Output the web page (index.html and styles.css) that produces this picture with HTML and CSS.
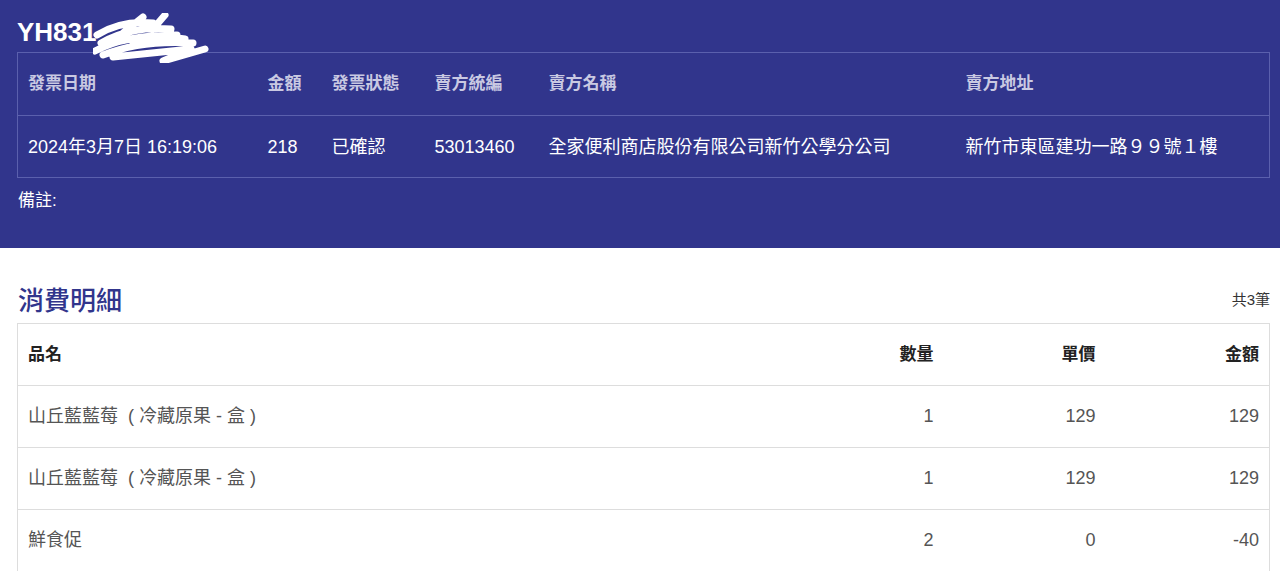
FILE: index.html
```html
<!DOCTYPE html>
<html lang="zh-Hant">
    <head>
        <meta charset="UTF-8" />
        <meta name="viewport" content="width=device-width, initial-scale=1.0" />
        <title>發票明細</title>
        <link rel="stylesheet" href="styles.css">
    </head>
    <body>
        <section class="invoice">
            <h1 class="invoice-no">
                YH831<svg class="scribble" width="120" height="50" viewBox="0 0 120 50" aria-hidden="true">
                    <path d="M4 22 C20 12 40 8 60 10 M8 30 C30 18 50 14 78 16 M2 38 C24 26 52 22 84 22 M10 42 C40 30 70 28 100 30 M20 44 L98 36 L70 48 L112 36 M30 20 L50 4 M60 16 L72 2 M40 30 C60 24 80 24 92 26"
                        fill="none" stroke="#fff" stroke-width="7" stroke-linecap="round" stroke-linejoin="round" />
                </svg>
            </h1>
            <table class="info">
                <colgroup>
                    <col style="width:240px">
                    <col style="width:64px">
                    <col style="width:103px">
                    <col style="width:114px">
                    <col style="width:417px">
                    <col>
                </colgroup>
                <tr>
                    <th>發票日期</th>
                    <th>金額</th>
                    <th>發票狀態</th>
                    <th>賣方統編</th>
                    <th>賣方名稱</th>
                    <th>賣方地址</th>
                </tr>
                <tr>
                    <td>2024年3月7日 16:19:06</td>
                    <td>218</td>
                    <td>已確認</td>
                    <td>53013460</td>
                    <td>全家便利商店股份有限公司新竹公學分公司</td>
                    <td>新竹市東區建功一路９９號１樓</td>
                </tr>
            </table>
            <p class="note">備註:</p>
        </section>

        <section class="detail">
            <div class="detail-head">
                <h2>消費明細</h2>
                <span class="count">共3筆</span>
            </div>
            <table class="items">
                <colgroup>
                    <col>
                    <col style="width:162px">
                    <col style="width:162px">
                    <col style="width:164px">
                </colgroup>
                <tr>
                    <th>品名</th>
                    <th class="num">數量</th>
                    <th class="num">單價</th>
                    <th class="num">金額</th>
                </tr>
                <tr>
                    <td>山丘藍藍莓 &nbsp;( 冷藏原果 - 盒 )</td>
                    <td class="num">1</td>
                    <td class="num">129</td>
                    <td class="num">129</td>
                </tr>
                <tr>
                    <td>山丘藍藍莓 &nbsp;( 冷藏原果 - 盒 )</td>
                    <td class="num">1</td>
                    <td class="num">129</td>
                    <td class="num">129</td>
                </tr>
                <tr>
                    <td>鮮食促</td>
                    <td class="num">2</td>
                    <td class="num">0</td>
                    <td class="num">-40</td>
                </tr>
            </table>
        </section>
    </body>
</html>
```

FILE: styles.css
```css
body {
    margin: 0;
    font-family: "Liberation Sans", "Noto Sans CJK TC", sans-serif;
    background-color: #fff;
}

.invoice {
    background-color: #31358c;
    color: #fff;
    padding: 0 10px 36px 17px;
}

.invoice-no {
    margin: 0;
    height: 40px;
    padding-top: 12px;
    display: flex;
    align-items: center;
    font-size: 26px;
    font-weight: bold;
    line-height: 1;
}

.scribble {
    margin-left: -4px;
    margin-top: 12px;
}

table {
    width: 100%;
    border-collapse: collapse;
    table-layout: fixed;
}

.info th,
.info td {
    text-align: left;
    padding: 20px 10px;
    line-height: 22px;
    border-top: 1px solid #5b60ad;
    border-bottom: 1px solid #5b60ad;
    white-space: nowrap;
}

.info td {
    padding-bottom: 19px;
}

.info tr > :first-child {
    border-left: 1px solid #5b60ad;
}

.info tr > :last-child {
    border-right: 1px solid #5b60ad;
}

.info th {
    font-size: 17px;
    color: #c9c9e2;
}

.info td {
    font-size: 18px;
}

.note {
    margin: 12px 0 0 1px;
    font-size: 17px;
    line-height: 22px;
}

.detail {
    padding: 38px 10px 0 17px;
}

.detail-head {
    display: flex;
    justify-content: space-between;
    align-items: flex-end;
}

.detail-head h2 {
    margin: 0 0 7px 1px;
    font-size: 26px;
    font-weight: 500;
    color: #31358c;
    line-height: 30px;
}

.count {
    font-size: 15px;
    color: #333;
    margin-bottom: 14px;
}

.items th,
.items td {
    text-align: left;
    padding: 20px 10px;
    line-height: 21px;
    border: 1px solid #ddd;
    border-left: none;
    border-right: none;
}

.items tr > :first-child {
    border-left: 1px solid #ddd;
}

.items tr > :last-child {
    border-right: 1px solid #ddd;
}

.items th {
    font-size: 17px;
    color: #222;
}

.items td {
    font-size: 18px;
    color: #555;
}

.items .num {
    text-align: right;
}
```
